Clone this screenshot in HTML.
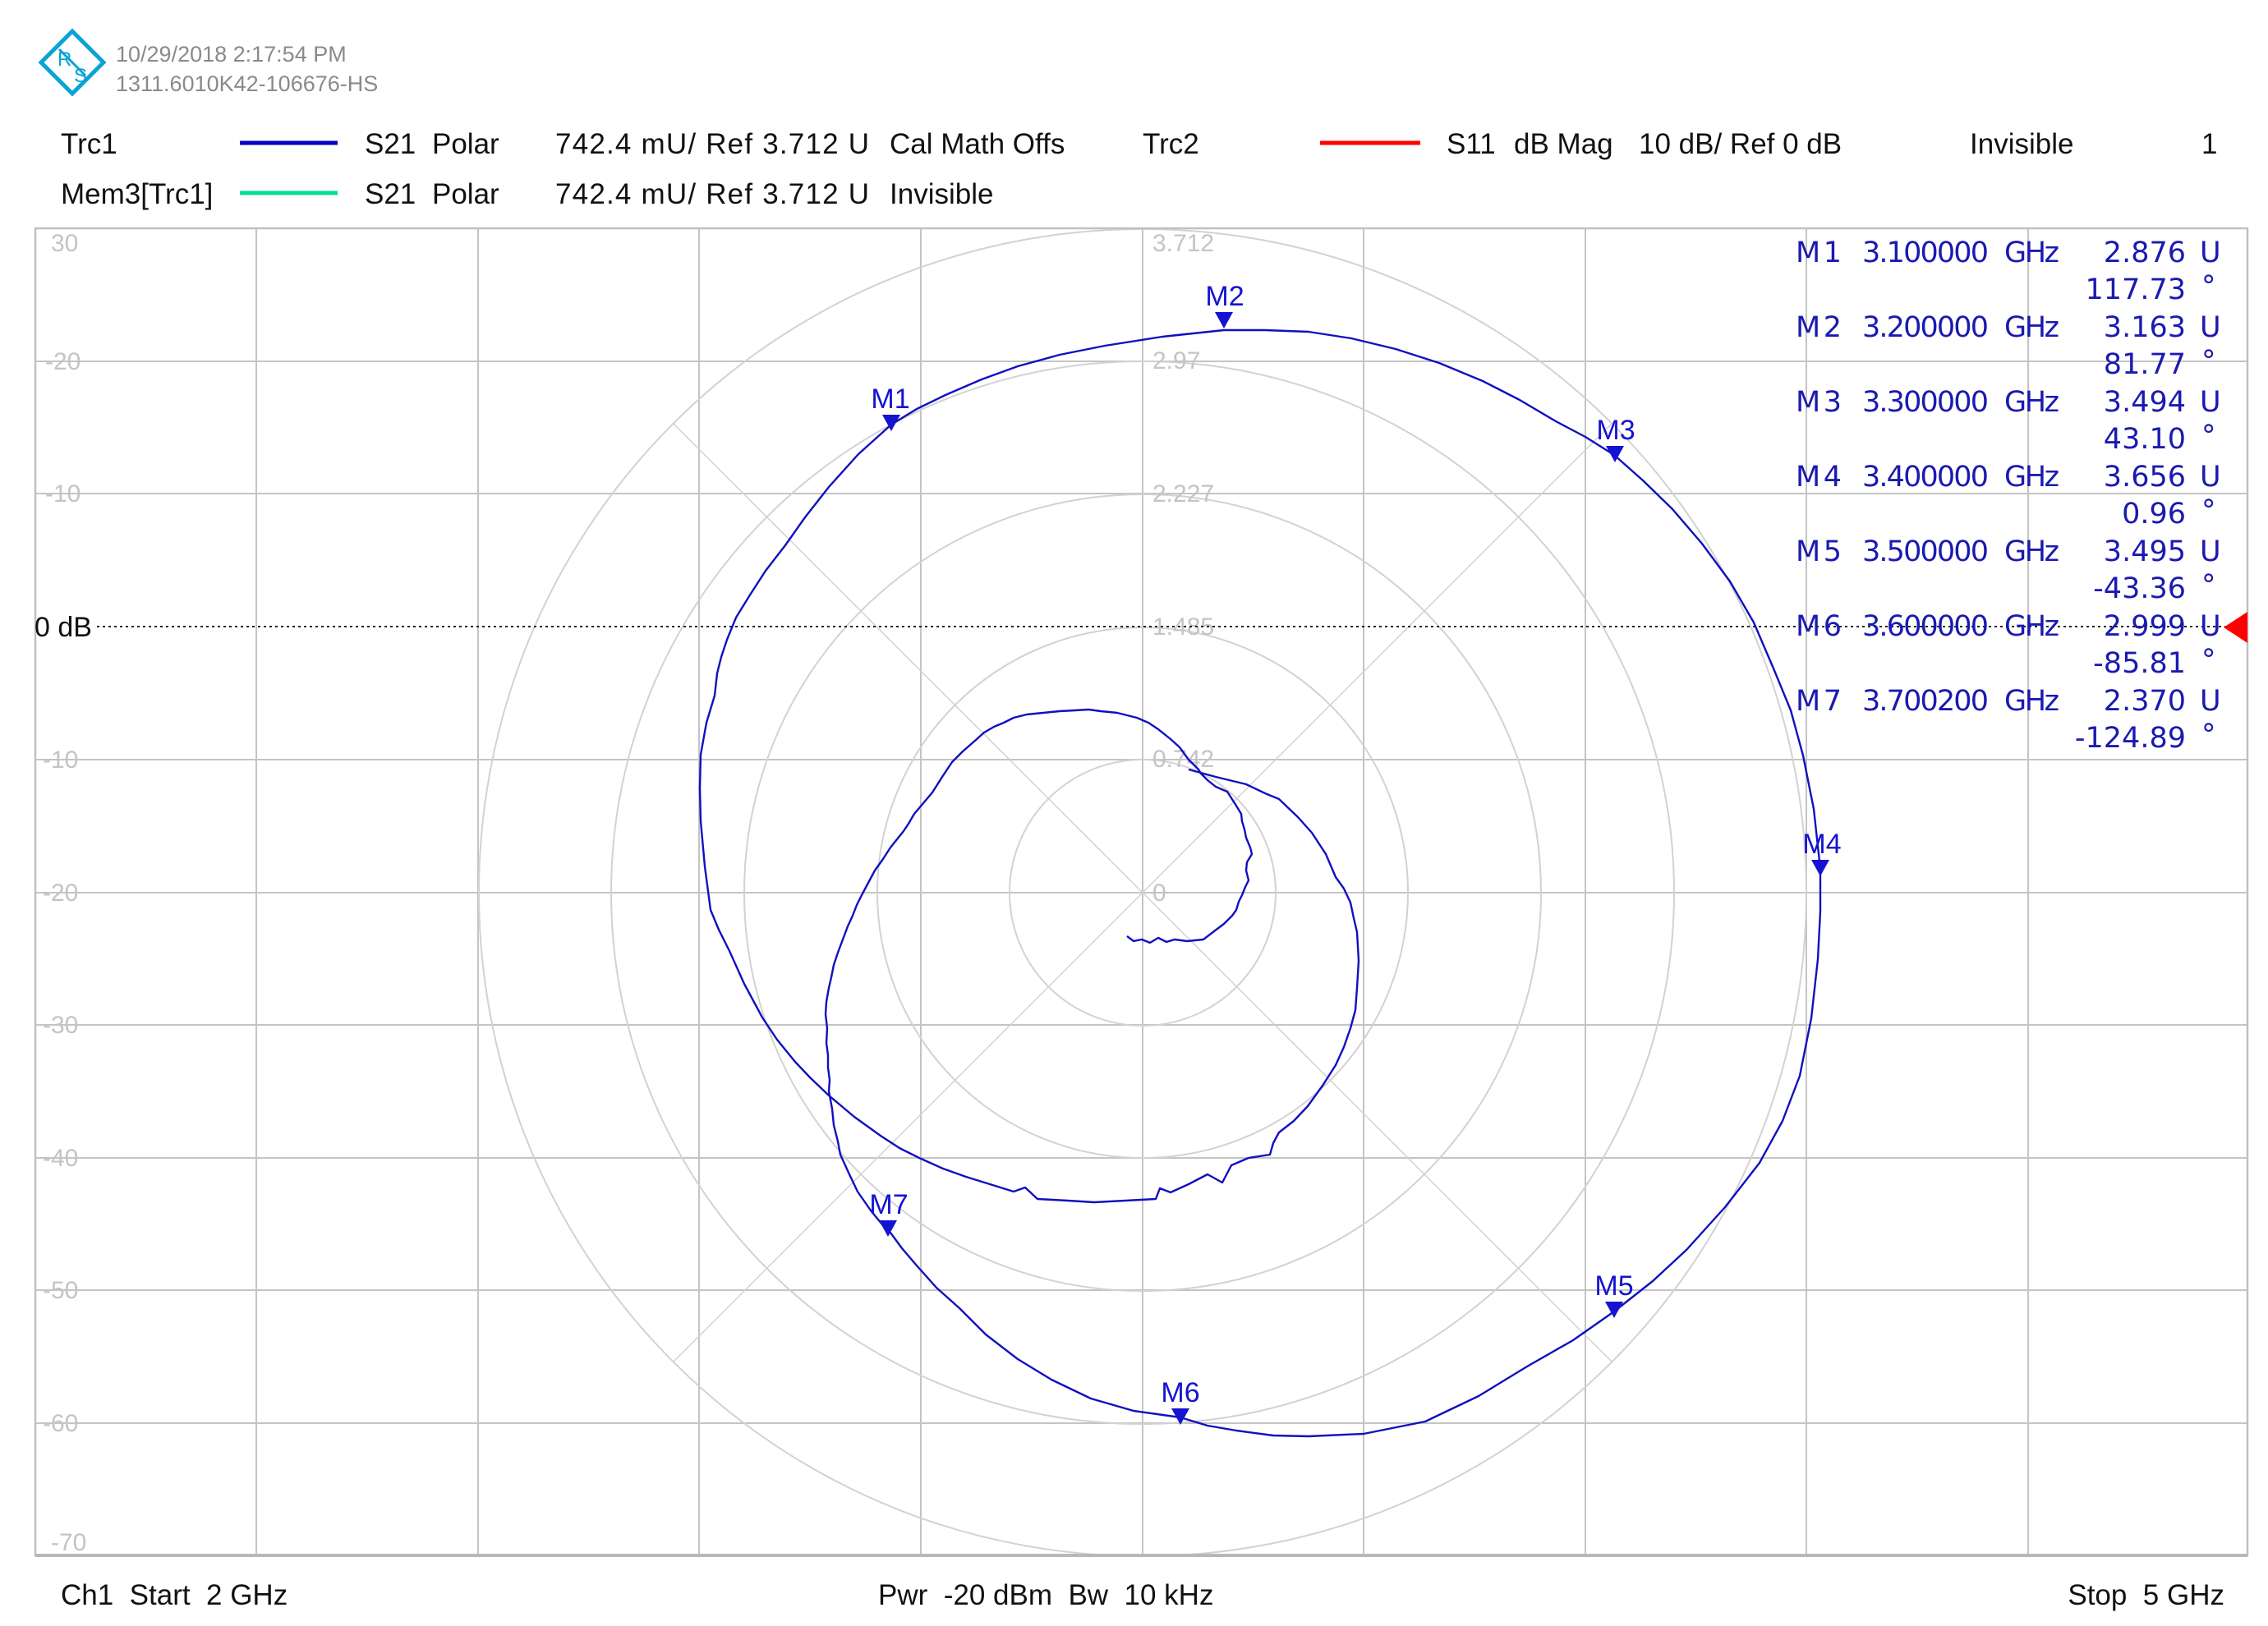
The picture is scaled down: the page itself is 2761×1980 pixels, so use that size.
<!DOCTYPE html>
<html><head><meta charset="utf-8"><style>
html,body{margin:0;padding:0;background:#fff;}
svg{display:block;}
</style></head><body>
<svg width="2761" height="1980" viewBox="0 0 2761 1980" xmlns="http://www.w3.org/2000/svg">
<rect width="2761" height="1980" fill="#fff"/>
<!-- logo -->
<g fill="none" stroke="#0aa3d6" stroke-width="5">
<polygon points="88,38 126,76 88,114 50,76"/>
<line x1="72" y1="60" x2="104" y2="92" stroke-width="3"/>
</g>
<text x="70" y="80" font-family="Liberation Sans,sans-serif" font-size="24" fill="#0aa3d6">R</text>
<text x="90" y="100" font-family="Liberation Sans,sans-serif" font-size="24" fill="#0aa3d6">S</text>
<g font-family="Liberation Sans,sans-serif" font-size="27" fill="#8a8a8a">
<text x="141" y="75">10/29/2018 2:17:54 PM</text>
<text x="141" y="111">1311.6010K42-106676-HS</text>
</g>
<!-- legend -->
<g font-family="Liberation Sans,sans-serif" font-size="35" fill="#111">
<text x="74" y="187">Trc1</text>
<text x="444" y="187">S21</text><text x="526" y="187">Polar</text>
<text x="676" y="187" textLength="382">742.4 mU/ Ref 3.712 U</text>
<text x="1083" y="187">Cal Math Offs</text>
<text x="1391" y="187">Trc2</text>
<text x="1761" y="187">S11</text><text x="1843" y="187">dB Mag</text>
<text x="1995" y="187">10 dB/ Ref 0 dB</text>
<text x="2398" y="187">Invisible</text>
<text x="2680" y="187">1</text>
<text x="74" y="248">Mem3[Trc1]</text>
<text x="444" y="248">S21</text><text x="526" y="248">Polar</text>
<text x="676" y="248" textLength="382">742.4 mU/ Ref 3.712 U</text>
<text x="1083" y="248">Invisible</text>
</g>
<line x1="292" y1="174" x2="411" y2="174" stroke="#0000c8" stroke-width="5"/>
<line x1="292" y1="235" x2="411" y2="235" stroke="#00e090" stroke-width="5"/>
<line x1="1607" y1="174" x2="1729" y2="174" stroke="#ff0000" stroke-width="5"/>
<!-- grid -->
<defs><clipPath id="pc"><rect x="43" y="278" width="2693" height="1616"/></clipPath></defs>
<g stroke="#c4c4c4" stroke-width="2">
<line x1="312" y1="278" x2="312" y2="1894"/><line x1="582" y1="278" x2="582" y2="1894"/>
<line x1="851" y1="278" x2="851" y2="1894"/><line x1="1121" y1="278" x2="1121" y2="1894"/>
<line x1="1391" y1="278" x2="1391" y2="1894"/><line x1="1660" y1="278" x2="1660" y2="1894"/>
<line x1="1930" y1="278" x2="1930" y2="1894"/><line x1="2199" y1="278" x2="2199" y2="1894"/>
<line x1="2469" y1="278" x2="2469" y2="1894"/>
<line x1="43" y1="440" x2="2736" y2="440"/><line x1="43" y1="601" x2="2736" y2="601"/>
<line x1="43" y1="925" x2="2736" y2="925"/><line x1="43" y1="1087" x2="2736" y2="1087"/>
<line x1="43" y1="1248" x2="2736" y2="1248"/><line x1="43" y1="1410" x2="2736" y2="1410"/>
<line x1="43" y1="1571" x2="2736" y2="1571"/><line x1="43" y1="1733" x2="2736" y2="1733"/>
</g>
<g clip-path="url(#pc)" fill="none" stroke="#d2d2d2" stroke-width="2">
<circle cx="1391" cy="1087" r="162"/><circle cx="1391" cy="1087" r="323"/>
<circle cx="1391" cy="1087" r="485"/><circle cx="1391" cy="1087" r="647"/>
<circle cx="1391" cy="1087" r="808"/>
<line x1="820" y1="516" x2="1962" y2="1658" stroke-width="1.5"/>
<line x1="1962" y1="516" x2="820" y2="1658" stroke-width="1.5"/>
</g>
<rect x="43" y="278" width="2693" height="1616" fill="none" stroke="#c0c0c0" stroke-width="2.5"/>
<line x1="43" y1="1894" x2="2736" y2="1894" stroke="#b8b8b8" stroke-width="4"/>
<!-- left labels -->
<g font-family="Liberation Sans,sans-serif" font-size="30" fill="#c4c4c4">
<text x="62" y="306">30</text>
<text x="55" y="450">-20</text><text x="55" y="611">-10</text>
<text x="52" y="935">-10</text><text x="52" y="1097">-20</text><text x="52" y="1258">-30</text>
<text x="52" y="1420">-40</text><text x="52" y="1581">-50</text><text x="52" y="1743">-60</text>
<text x="62" y="1888">-70</text>
<text x="1403" y="306">3.712</text><text x="1403" y="449">2.97</text>
<text x="1403" y="611">2.227</text><text x="1403" y="773">1.485</text>
<text x="1403" y="934">0.742</text><text x="1403" y="1097">0</text>
</g>
<text x="42" y="775" font-family="Liberation Sans,sans-serif" font-size="34" fill="#111">0 dB</text>
<line x1="118" y1="763" x2="2736" y2="763" stroke="#222" stroke-width="2" stroke-dasharray="3,4"/>
<polygon points="2707,764 2736,745 2736,783" fill="#ff0000"/>
<!-- trace -->
<polyline fill="none" stroke="#1010c0" stroke-width="2.4" stroke-linejoin="round" points="1372,1140 1380,1146 1390,1144 1400,1148 1410,1142 1420,1147 1430,1144 1445,1146 1465,1144 1478,1134 1490,1125 1500,1115 1505,1108 1508,1098 1512,1090 1516,1080 1520,1072 1517,1060 1518,1050 1524,1040 1522,1032 1517,1020 1515,1010 1512,1000 1511,991 1503,978 1494,964 1480,958 1470,950 1462,942 1459,937 1447,925 1436,910 1425,900 1410,888 1398,880 1384,874 1360,868 1340,866 1325,864 1309,865 1290,866 1270,868 1250,870 1234,874 1222,880 1210,885 1198,892 1188,901 1172,915 1159,928 1147,946 1135,965 1124,978 1113,991 1106,1003 1100,1012 1092,1022 1084,1032 1075,1046 1065,1060 1057,1075 1049,1090 1043,1102 1038,1115 1032,1128 1026,1144 1020,1160 1015,1175 1012,1190 1009,1203 1006,1220 1005,1235 1007,1252 1006,1270 1008,1285 1008,1300 1010,1315 1009,1329 1013,1350 1015,1370 1020,1390 1023,1406 1034,1430 1044,1451 1060,1474 1078,1496 1081,1497 1098,1520 1115,1540 1140,1568 1168,1593 1200,1625 1239,1655 1280,1680 1328,1703 1380,1718 1437,1726 1470,1736 1505,1742 1550,1748 1593,1749 1660,1746 1735,1731 1800,1700 1859,1664 1915,1632 1965,1597 2012,1560 2053,1522 2100,1470 2142,1416 2170,1365 2191,1310 2205,1240 2213,1168 2216,1110 2216,1058 2208,985 2195,920 2180,865 2159,814 2135,758 2106,708 2072,662 2036,620 2000,585 1965,554 1930,532 1894,513 1850,487 1805,464 1752,442 1699,425 1645,412 1593,404 1540,402 1490,402 1415,410 1345,421 1290,432 1239,446 1195,462 1151,481 1116,498 1085,517 1045,553 1009,593 980,630 956,664 932,695 912,726 896,752 885,779 878,800 873,820 870,847 860,880 853,919 852,960 853,1000 858,1055 865,1108 875,1132 888,1158 906,1198 928,1239 946,1266 968,1293 986,1312 1009,1334 1040,1360 1072,1383 1095,1398 1119,1410 1148,1423 1176,1433 1205,1442 1234,1451 1248,1446 1263,1460 1300,1462 1332,1464 1370,1462 1407,1460 1412,1447 1425,1452 1447,1442 1470,1430 1488,1440 1499,1419 1520,1410 1546,1406 1550,1392 1557,1379 1575,1365 1592,1347 1610,1322 1626,1297 1636,1275 1644,1252 1650,1230 1652,1203 1654,1170 1652,1135 1648,1118 1644,1099 1636,1082 1626,1068 1614,1040 1597,1014 1580,995 1557,973 1540,966 1517,955 1480,946 1447,937"/>
<!-- markers -->
<g fill="#1414d0">
<polygon points="1074,505 1096,505 1085,525"/>
<polygon points="1479,380 1501,380 1490,400"/>
<polygon points="1955,543 1977,543 1966,563"/>
<polygon points="2205,1047 2227,1047 2216,1067"/>
<polygon points="1954,1585 1976,1585 1965,1605"/>
<polygon points="1426,1715 1448,1715 1437,1735"/>
<polygon points="1070,1486 1092,1486 1081,1506"/>
</g>
<g font-family="Liberation Sans,sans-serif" font-size="34" fill="#1414d0" text-anchor="middle">
<text x="1084" y="497">M1</text><text x="1491" y="372">M2</text>
<text x="1967" y="535">M3</text><text x="2218" y="1039">M4</text>
<text x="1965" y="1577">M5</text><text x="1437" y="1707">M6</text>
<text x="1082" y="1478">M7</text>
</g>
<!-- marker table -->
<g font-family="DejaVu Sans,sans-serif" font-size="35" fill="#1a1ab0">
<g textLength="56">
<text x="2186" y="319" textLength="56">M1</text><text x="2186" y="410" textLength="56">M2</text>
<text x="2186" y="501" textLength="56">M3</text><text x="2186" y="592" textLength="56">M4</text>
<text x="2186" y="683" textLength="56">M5</text><text x="2186" y="774" textLength="56">M6</text>
<text x="2186" y="865" textLength="56">M7</text>
</g>
<text x="2267" y="319" textLength="154">3.100000</text><text x="2440" y="319" textLength="67">GHz</text>
<text x="2267" y="410" textLength="154">3.200000</text><text x="2440" y="410" textLength="67">GHz</text>
<text x="2267" y="501" textLength="154">3.300000</text><text x="2440" y="501" textLength="67">GHz</text>
<text x="2267" y="592" textLength="154">3.400000</text><text x="2440" y="592" textLength="67">GHz</text>
<text x="2267" y="683" textLength="154">3.500000</text><text x="2440" y="683" textLength="67">GHz</text>
<text x="2267" y="774" textLength="154">3.600000</text><text x="2440" y="774" textLength="67">GHz</text>
<text x="2267" y="865" textLength="154">3.700200</text><text x="2440" y="865" textLength="67">GHz</text>
<g text-anchor="end">
<text x="2661" y="319">2.876</text><text x="2661" y="364">117.73</text>
<text x="2661" y="410">3.163</text><text x="2661" y="455">81.77</text>
<text x="2661" y="501">3.494</text><text x="2661" y="546">43.10</text>
<text x="2661" y="592">3.656</text><text x="2661" y="637">0.96</text>
<text x="2661" y="683">3.495</text><text x="2661" y="728">-43.36</text>
<text x="2661" y="774">2.999</text><text x="2661" y="819">-85.81</text>
<text x="2661" y="865">2.370</text><text x="2661" y="910">-124.89</text>
</g>
<text x="2678" y="319">U</text><text x="2678" y="410">U</text><text x="2678" y="501">U</text>
<text x="2678" y="592">U</text><text x="2678" y="683">U</text><text x="2678" y="774">U</text><text x="2678" y="865">U</text>
<text x="2680" y="360">°</text><text x="2680" y="451">°</text><text x="2680" y="542">°</text>
<text x="2680" y="633">°</text><text x="2680" y="724">°</text><text x="2680" y="815">°</text><text x="2680" y="906">°</text>
</g>
<!-- footer -->
<g font-family="Liberation Sans,sans-serif" font-size="35" fill="#111">
<text x="74" y="1954" xml:space="preserve">Ch1  Start  2 GHz</text>
<text x="1069" y="1954" xml:space="preserve">Pwr  -20 dBm  Bw  10 kHz</text>
<text x="2708" y="1954" text-anchor="end" xml:space="preserve">Stop  5 GHz</text>
</g>
</svg>
</body></html>
